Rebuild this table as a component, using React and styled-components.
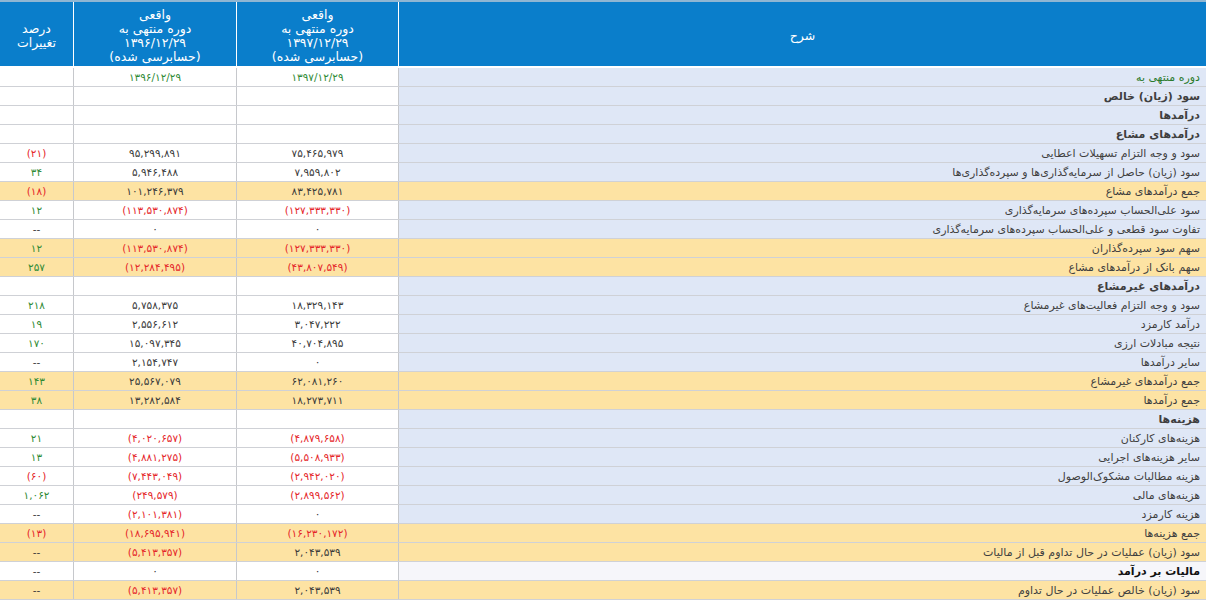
import React from "react";
import styled, { createGlobalStyle } from "styled-components";

const Global = createGlobalStyle`
  html, body { margin: 0; padding: 0; background: #ffffff; }
  body { font-family: "DejaVu Sans", "Noto Sans", sans-serif; }
`;

const COLS = "808px 162px 163px 73px";

const Page = styled.div`
  width: 1206px;
  height: 602px;
  overflow: hidden;
  direction: rtl;
  background: #fff;
`;

const TopStrip = styled.div`
  height: 2px;
  background: #8fb6d3;
`;

const Header = styled.div`
  display: grid;
  grid-template-columns: ${COLS};
  height: 64px;
  background: #0a7ecb;
  border-bottom: 2px solid #ffffff;
`;

const HeadCell = styled.div`
  display: flex;
  flex-direction: column;
  align-items: center;
  justify-content: center;
  color: #ffffff;
  font-size: 12.5px;
  line-height: 14px;
  text-align: center;
  border-left: ${(p) => (p.$last ? "none" : "1px solid #ffffff")};
  padding-top: 4px;
  box-sizing: border-box;
`;

const HeadLine = styled.span`
  white-space: nowrap;
`;

const Row = styled.div`
  display: grid;
  grid-template-columns: ${COLS};
  height: 19px;
  box-sizing: border-box;
  border-bottom: 1px solid #cfd1d6;
  background: ${(p) => (p.$total ? "#fde3a3" : "#ffffff")};
`;

const DescCell = styled.div`
  display: flex;
  align-items: center;
  padding-right: 6px;
  font-size: 11px;
  font-weight: ${(p) => (p.$bold ? "bold" : "normal")};
  color: ${(p) => (p.$green ? "#2b7a2b" : p.$dark ? "#111" : "#3f3f3f")};
  background: ${(p) =>
    p.$total ? "transparent" : p.$plain ? "#f6f6fa" : "#dfe7f6"};
  border-left: 1px solid #c6c8cc;
  white-space: nowrap;
`;

const NumCell = styled.div`
  display: flex;
  align-items: center;
  justify-content: center;
  direction: ltr;
  font-size: 10.5px;
  color: ${(p) =>
    p.$tone === "red" ? "#e5262a" : p.$tone === "green" ? "#2f8a35" : "#3a3a3a"};
  border-left: ${(p) => (p.$last ? "none" : "1px solid #c6c8cc")};
  white-space: nowrap;
`;

const rows = [
  { d: "دوره منتهی به", kind: "period", a: "۱۳۹۷/۱۲/۲۹", b: "۱۳۹۶/۱۲/۲۹", p: "" },
  { d: "سود (زیان) خالص", kind: "section" },
  { d: "درآمدها", kind: "section" },
  { d: "درآمدهای مشاع", kind: "section" },
  { d: "سود و وجه التزام تسهیلات اعطایی", a: "۷۵,۴۶۵,۹۷۹", b: "۹۵,۲۹۹,۸۹۱", p: "(۲۱)" },
  { d: "سود (زیان) حاصل از سرمایه‌گذاری‌ها و سپرده‌گذاری‌ها", a: "۷,۹۵۹,۸۰۲", b: "۵,۹۴۶,۴۸۸", p: "۳۴" },
  { d: "جمع درآمدهای مشاع", kind: "total", a: "۸۳,۴۲۵,۷۸۱", b: "۱۰۱,۲۴۶,۳۷۹", p: "(۱۸)" },
  { d: "سود علی‌الحساب سپرده‌های سرمایه‌گذاری", a: "(۱۲۷,۳۳۳,۳۳۰)", b: "(۱۱۳,۵۳۰,۸۷۴)", p: "۱۲" },
  { d: "تفاوت سود قطعی و علی‌الحساب سپرده‌های سرمایه‌گذاری", a: "۰", b: "۰", p: "--" },
  { d: "سهم سود سپرده‌گذاران", kind: "total", a: "(۱۲۷,۳۳۳,۳۳۰)", b: "(۱۱۳,۵۳۰,۸۷۴)", p: "۱۲" },
  { d: "سهم بانک از درآمدهای مشاع", kind: "total", a: "(۴۳,۸۰۷,۵۴۹)", b: "(۱۲,۲۸۴,۴۹۵)", p: "۲۵۷" },
  { d: "درآمدهای غیرمشاع", kind: "section" },
  { d: "سود و وجه التزام فعالیت‌های غیرمشاع", a: "۱۸,۳۲۹,۱۴۳", b: "۵,۷۵۸,۳۷۵", p: "۲۱۸" },
  { d: "درآمد کارمزد", a: "۳,۰۴۷,۲۲۲", b: "۲,۵۵۶,۶۱۲", p: "۱۹" },
  { d: "نتیجه مبادلات ارزی", a: "۴۰,۷۰۴,۸۹۵", b: "۱۵,۰۹۷,۳۴۵", p: "۱۷۰" },
  { d: "سایر درآمدها", a: "۰", b: "۲,۱۵۴,۷۴۷", p: "--" },
  { d: "جمع درآمدهای غیرمشاع", kind: "total", a: "۶۲,۰۸۱,۲۶۰", b: "۲۵,۵۶۷,۰۷۹", p: "۱۴۳" },
  { d: "جمع درآمدها", kind: "total", a: "۱۸,۲۷۳,۷۱۱", b: "۱۳,۲۸۲,۵۸۴", p: "۳۸" },
  { d: "هزینه‌ها", kind: "section" },
  { d: "هزینه‌های کارکنان", a: "(۴,۸۷۹,۶۵۸)", b: "(۴,۰۲۰,۶۵۷)", p: "۲۱" },
  { d: "سایر هزینه‌های اجرایی", a: "(۵,۵۰۸,۹۳۳)", b: "(۴,۸۸۱,۲۷۵)", p: "۱۳" },
  { d: "هزینه مطالبات مشکوک‌الوصول", a: "(۲,۹۴۲,۰۲۰)", b: "(۷,۴۴۳,۰۴۹)", p: "(۶۰)" },
  { d: "هزینه‌های مالی", a: "(۲,۸۹۹,۵۶۲)", b: "(۲۴۹,۵۷۹)", p: "۱,۰۶۲" },
  { d: "هزینه کارمزد", a: "۰", b: "(۲,۱۰۱,۳۸۱)", p: "--" },
  { d: "جمع هزینه‌ها", kind: "total", a: "(۱۶,۲۳۰,۱۷۲)", b: "(۱۸,۶۹۵,۹۴۱)", p: "(۱۳)" },
  { d: "سود (زیان) عملیات در حال تداوم قبل از مالیات", kind: "total", a: "۲,۰۴۳,۵۳۹", b: "(۵,۴۱۳,۳۵۷)", p: "--" },
  { d: "مالیات بر درآمد", kind: "tax", a: "۰", b: "۰", p: "--" },
  { d: "سود (زیان) خالص عملیات در حال تداوم", kind: "total", a: "۲,۰۴۳,۵۳۹", b: "(۵,۴۱۳,۳۵۷)", p: "--" },
];

const toneOf = (v, isPct, period) => {
  if (period) return "green";
  if (!v) return "plain";
  if (v.startsWith("(")) return "red";
  if (isPct && v !== "--") return "green";
  return "plain";
};

const PeriodHead = ({ date }) => (
  <HeadCell>
    <HeadLine>واقعی</HeadLine>
    <HeadLine>دوره منتهی به</HeadLine>
    <HeadLine>{date}</HeadLine>
    <HeadLine>(حسابرسی شده)</HeadLine>
  </HeadCell>
);

export default function App() {
  return (
    <>
      <Global />
      <Page>
        <TopStrip />
        <Header>
          <HeadCell>شرح</HeadCell>
          <PeriodHead date="۱۳۹۷/۱۲/۲۹" />
          <PeriodHead date="۱۳۹۶/۱۲/۲۹" />
          <HeadCell $last>
            <HeadLine>درصد</HeadLine>
            <HeadLine>تغییرات</HeadLine>
          </HeadCell>
        </Header>
        {rows.map((r, i) => {
          const period = r.kind === "period";
          return (
            <Row key={i} $total={r.kind === "total"}>
              <DescCell
                $bold={r.kind === "section" || r.kind === "tax"}
                $dark={r.kind === "tax"}
                $plain={r.kind === "tax"}
                $total={r.kind === "total"}
                $green={period}
              >
                {r.d}
              </DescCell>
              <NumCell $tone={toneOf(r.a, false, period)}>{r.a}</NumCell>
              <NumCell $tone={toneOf(r.b, false, period)}>{r.b}</NumCell>
              <NumCell $last $tone={toneOf(r.p, true, false)}>{r.p}</NumCell>
            </Row>
          );
        })}
      </Page>
    </>
  );
}
